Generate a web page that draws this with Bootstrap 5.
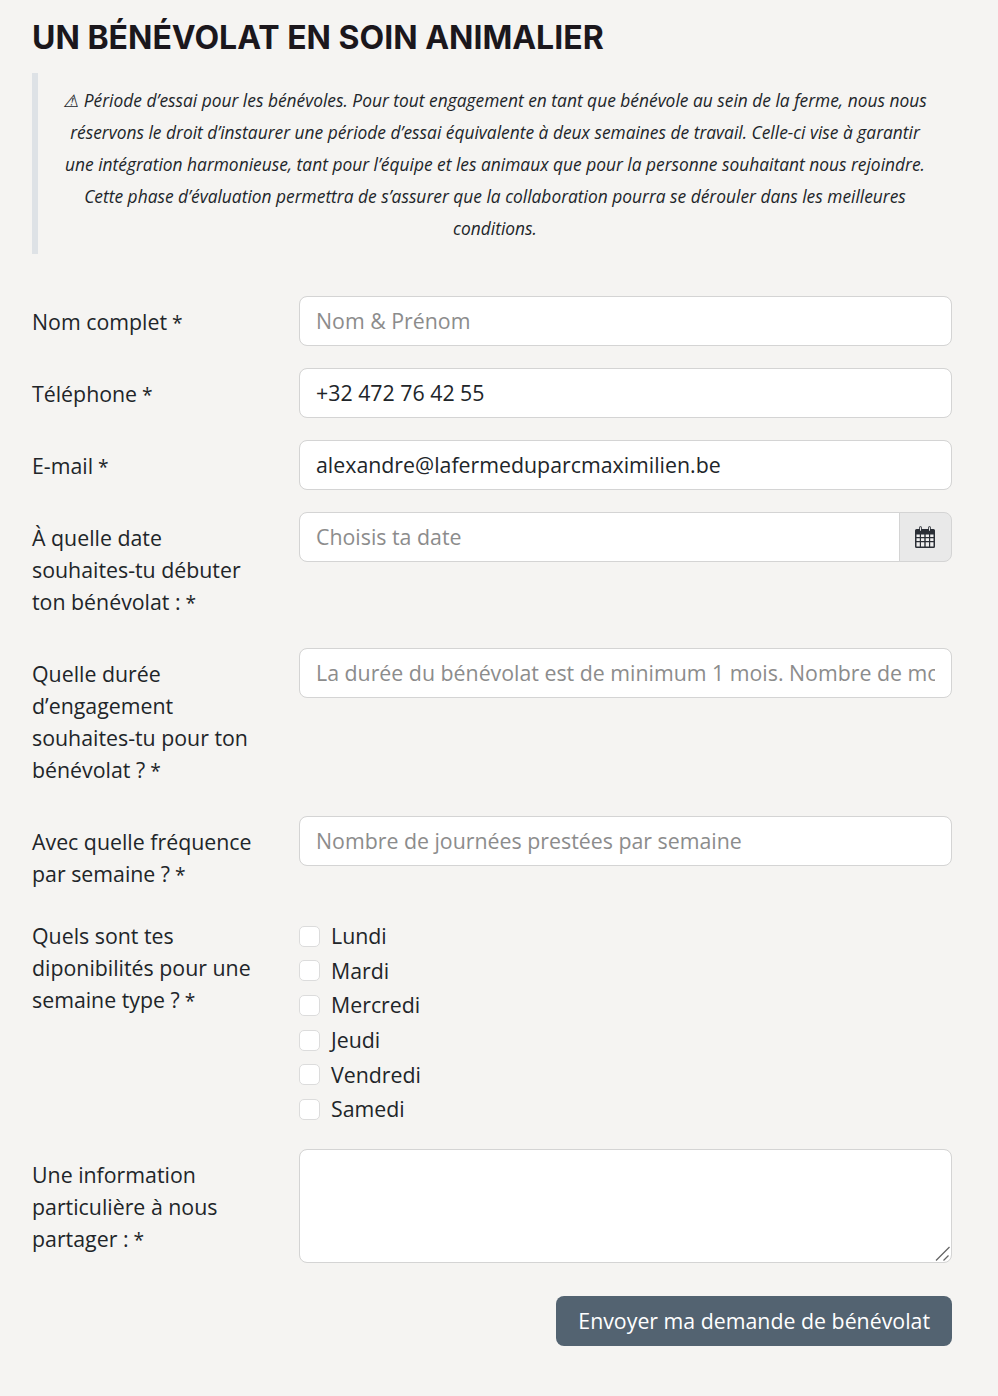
<!DOCTYPE html>
<html lang="fr">
<head>
<meta charset="utf-8">
<title>Un bénévolat en soin animalier</title>
<link href="https://cdn.jsdelivr.net/npm/bootstrap@5.3.0/dist/css/bootstrap.min.css" rel="stylesheet">
<style>
body{background:#f5f4f2;color:#212529;font-family:"Open Sans","Noto Sans",sans-serif;font-size:21.33px;line-height:32px}
.page-wrap{padding:17px 46px 50px 32px}
.page-title{font-family:Inter,sans-serif;font-weight:700;font-size:32px;line-height:42px;color:#1b171c;margin:0 0 14px}
.notice{border-left:6px solid #dee2e6;padding:11px 24px 10px;margin:0 0 42px;font-style:italic;font-size:17.36px;line-height:32px;text-align:center}
.form-line{margin-bottom:22px}
.label-col{flex:0 0 267px;width:267px;padding:10px 32px 8px 0;margin:0}
.label-flush{padding-top:0;padding-bottom:0}
.req{font-size:.9em;line-height:1;margin-left:5px}
.form-control,.input-group-text{font-size:21.33px;line-height:32px;padding:8px 16px;border-color:#d4d4d4;border-radius:8px;color:#212529}
.form-control::placeholder{color:#8c8c8c;opacity:1}
.input-group-text{background:#e9e9e9;color:#212529;padding:8px 16px 8px 15px}
.avail-col{margin-top:-1px}
.avail-item{display:flex;align-items:center;gap:11px;height:34.6px;margin:0}
.avail-item .form-check-input{width:21px;height:21px;margin:0;border-color:#dcdcdc;border-radius:5px}
.area-box{position:relative}
.area-input{height:114px;resize:none}
.area-grip{position:absolute;right:1px;bottom:1px;pointer-events:none}
.send-btn{background:#536371;border:0;color:#fff;font-size:21.33px;line-height:32px;padding:9px 22px;border-radius:8px;margin-top:11px}
.send-btn:hover{background:#465461;color:#fff}
</style>
</head>
<body>
<main class="page-wrap">
  <h1 class="page-title">UN BÉNÉVOLAT EN SOIN ANIMALIER</h1>
  <blockquote class="notice">⚠ Période d’essai pour les bénévoles. Pour tout engagement en tant que bénévole au sein de la ferme, nous nous réservons le droit d’instaurer une période d’essai équivalente à deux semaines de travail. Celle-ci vise à garantir une intégration harmonieuse, tant pour l’équipe et les animaux que pour la personne souhaitant nous rejoindre. Cette phase d’évaluation permettra de s’assurer que la collaboration pourra se dérouler dans les meilleures conditions.</blockquote>
  <form>
    <div class="d-flex form-line">
      <label class="label-col" for="f1">Nom complet<span class="req">*</span></label>
      <div class="flex-grow-1"><input id="f1" class="form-control" type="text" placeholder="Nom &amp; Prénom"></div>
    </div>
    <div class="d-flex form-line">
      <label class="label-col" for="f2">Téléphone<span class="req">*</span></label>
      <div class="flex-grow-1"><input id="f2" class="form-control" type="text" value="+32 472 76 42 55"></div>
    </div>
    <div class="d-flex form-line">
      <label class="label-col" for="f3">E-mail<span class="req">*</span></label>
      <div class="flex-grow-1"><input id="f3" class="form-control" type="text" value="alexandre@lafermeduparcmaximilien.be"></div>
    </div>
    <div class="d-flex form-line">
      <label class="label-col" for="f4">À quelle date souhaites-tu débuter ton bénévolat :<span class="req">*</span></label>
      <div class="flex-grow-1">
        <div class="input-group">
          <input id="f4" class="form-control" type="text" placeholder="Choisis ta date">
          <span class="input-group-text">
            <svg width="20" height="22" viewBox="0 0 20 22" aria-hidden="true"><path fill="#2b2f36" d="M1.500 3H4.200V1.500a1.300 1.300 0 0 1 2.600 0V3h6.400V1.500a1.300 1.300 0 0 1 2.600 0V3h2.700A1.500 1.500 0 0 1 20 4.500v16a1.500 1.500 0 0 1-1.500 1.500h-17A1.500 1.500 0 0 1 0 20.500v-16A1.500 1.500 0 0 1 1.500 3z"/><path fill="#e9e9e9" d="M5 1.200h1v3.600H5zM14 1.200h1v3.600h-1z"/><path fill="#f0f0f0" d="M1.500 8.500h3.300V11H1.500zM6 8.500h3.300V11H6zM10.700 8.500H14V11h-3.300zM15.200 8.500h3.300V11h-3.300zM1.500 12.200h3.300v2.800H1.500zM6 12.200h3.300v2.800H6zM10.700 12.200H14v2.800h-3.300zM15.200 12.200h3.300v2.800h-3.300zM1.500 16.200h3.300v4.300H1.500zM6 16.200h3.300v4.300H6zM10.700 16.200H14v4.300h-3.300zM15.200 16.200h3.300v4.300h-3.300z"/></svg>
          </span>
        </div>
      </div>
    </div>
    <div class="d-flex form-line">
      <label class="label-col" for="f5">Quelle durée d’engagement souhaites-tu pour ton bénévolat ?<span class="req">*</span></label>
      <div class="flex-grow-1"><input id="f5" class="form-control" type="text" placeholder="La durée du bénévolat est de minimum 1 mois. Nombre de mois souhaités"></div>
    </div>
    <div class="d-flex form-line">
      <label class="label-col" for="f6">Avec quelle fréquence par semaine ?<span class="req">*</span></label>
      <div class="flex-grow-1"><input id="f6" class="form-control" type="text" placeholder="Nombre de journées prestées par semaine"></div>
    </div>
    <div class="d-flex form-line">
      <div class="label-col label-flush">Quels sont tes diponibilités pour une semaine type ?<span class="req">*</span></div>
      <div class="flex-grow-1 avail-col">
        <label class="avail-item"><input class="form-check-input" type="checkbox">Lundi</label>
        <label class="avail-item"><input class="form-check-input" type="checkbox">Mardi</label>
        <label class="avail-item"><input class="form-check-input" type="checkbox">Mercredi</label>
        <label class="avail-item"><input class="form-check-input" type="checkbox">Jeudi</label>
        <label class="avail-item"><input class="form-check-input" type="checkbox">Vendredi</label>
        <label class="avail-item"><input class="form-check-input" type="checkbox">Samedi</label>
      </div>
    </div>
    <div class="d-flex form-line">
      <label class="label-col" for="f7">Une information particulière à nous partager :<span class="req">*</span></label>
      <div class="flex-grow-1 area-box">
        <textarea id="f7" class="form-control area-input"></textarea>
        <svg class="area-grip" width="18" height="18" viewBox="0 0 18 18" aria-hidden="true"><path stroke="#666" stroke-width="1.300" fill="none" d="M3 16.500 16.500 3M10.500 16.500l5-5"/></svg>
      </div>
    </div>
    <div class="d-flex justify-content-end">
      <button type="button" class="btn send-btn">Envoyer ma demande de bénévolat</button>
    </div>
  </form>
</main>
<script src="https://cdn.jsdelivr.net/npm/bootstrap@5.3.0/dist/js/bootstrap.bundle.min.js"></script>
</body>
</html>
